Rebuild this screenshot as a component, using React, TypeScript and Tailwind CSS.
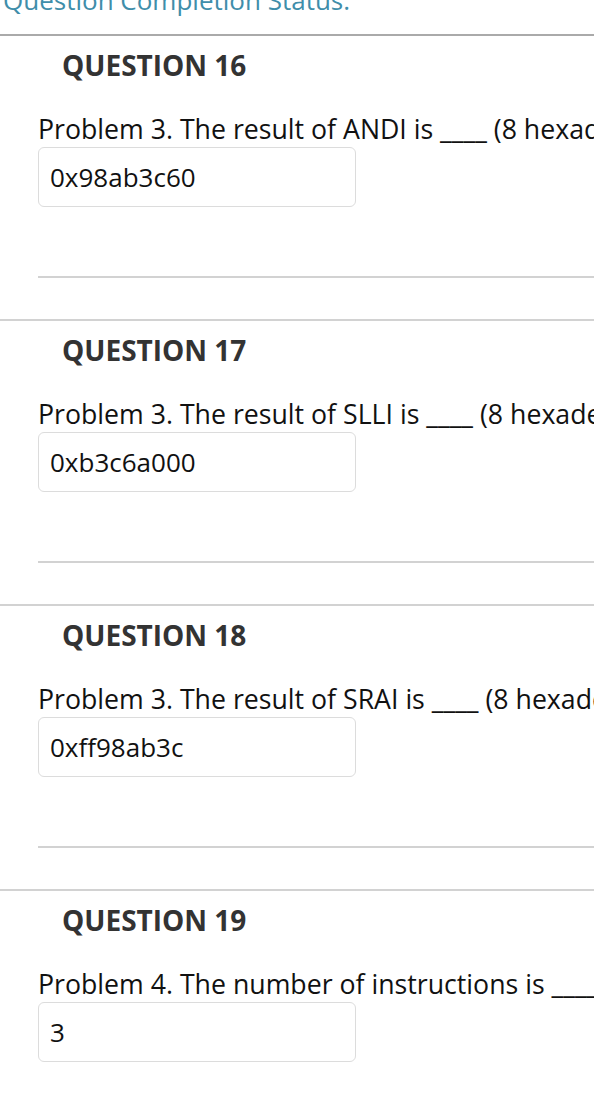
import React from "react";

const questions = [
  { n: 16, text: "Problem 3. The result of ANDI is ____ (8 hexadecimal digits)", answer: "0x98ab3c60" },
  { n: 17, text: "Problem 3. The result of SLLI is ____ (8 hexadecimal digits)", answer: "0xb3c6a000" },
  { n: 18, text: "Problem 3. The result of SRAI is ____ (8 hexadecimal digits)", answer: "0xff98ab3c" },
  { n: 19, text: "Problem 4. The number of instructions is ____", answer: "3" },
];

function Question({ n, text, answer, first }: { n: number; text: string; answer: string; first?: boolean }) {
  return (
    <section className={first ? "border-t-2 border-[#aaaaaa]" : "border-t-2 border-[#d2d2d2]"}>
      <h2 className="pl-[62px] pt-[10px] text-[28px] leading-[38px] font-bold text-[#333333]">QUESTION {n}</h2>
      <div className="pl-[38px]">
        <p className="mt-[27px] text-[26.7px] leading-[36px] text-[#111111] whitespace-nowrap">{text}</p>
        <div className="w-[318px] h-[60px] border border-[#dcdcdc] rounded-[6px] flex items-center px-[11px] text-[26px] text-[#111111]">
          {answer}
        </div>
        <div className="mt-[69px] h-[2px] bg-[#d2d2d2]" />
        <div className="h-[41px]" />
      </div>
    </section>
  );
}

export default function App() {
  return (
    <div className="w-[594px] h-[1112px] overflow-hidden bg-white font-['Open_Sans',sans-serif]">
      <div className="h-[34px] overflow-hidden">
        <div className="-mt-[13px] pl-[3px] text-[26px] leading-[26px] text-[#3f8eaa] whitespace-nowrap">
          Question Completion Status:
        </div>
      </div>
      {questions.map((q, i) => (
        <Question key={q.n} {...q} first={i === 0} />
      ))}
    </div>
  );
}
